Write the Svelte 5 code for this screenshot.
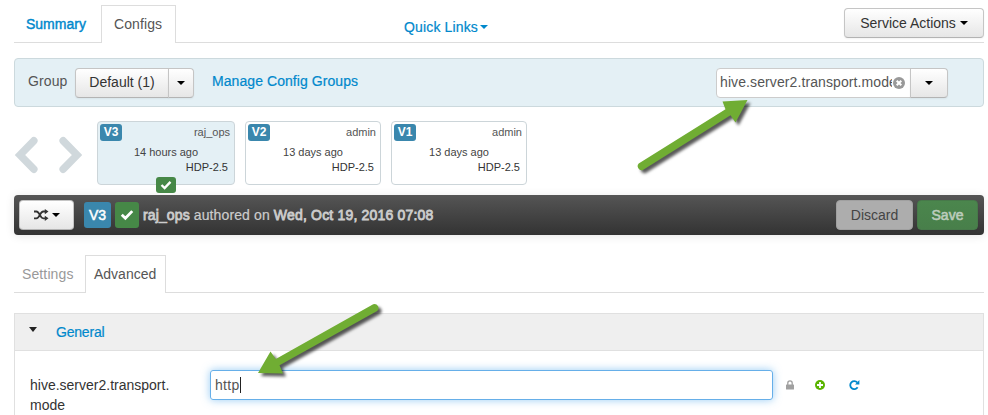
<script>
  const versions = [
    { tag: 'V3', user: 'raj_ops', age: '14 hours ago', stack: 'HDP-2.5', current: true },
    { tag: 'V2', user: 'admin', age: '13 days ago', stack: 'HDP-2.5', current: false },
    { tag: 'V1', user: 'admin', age: '13 days ago', stack: 'HDP-2.5', current: false }
  ];
</script>

{#snippet check(w)}
  <svg class="check" width={w} height={w * 0.8} viewBox="0 0 12 9.6"><path d="M1.5 5 4.6 8 10.5 1.8" fill="none" stroke="#fff" stroke-width="2.4" /></svg>
{/snippet}

<div class="page">
  <header class="top">
    <nav class="tabs">
      <a class="tab summary" href="#summary">Summary</a>
      <span class="tab active">Configs</span>
    </nav>
    <a class="quick" href="#links">Quick Links<i class="caret"></i></a>
    <button class="btn actions">Service Actions<i class="caret"></i></button>
  </header>

  <section class="group-bar">
    <span class="group-label">Group</span>
    <div class="split">
      <button class="btn name">Default (1)</button>
      <button class="btn drop"><i class="caret"></i></button>
    </div>
    <a class="manage" href="#groups">Manage Config Groups</a>
    <div class="search">
      <div class="field">
        <span class="query">hive.server2.transport.mode</span>
        <svg width="12" height="12" viewBox="0 0 12 12"><circle cx="6" cy="6" r="6" fill="#999" /><path d="M3.7 3.7 8.3 8.3M8.3 3.7 3.7 8.3" stroke="#fff" stroke-width="2" /></svg>
      </div>
      <button class="btn filter"><i class="caret"></i></button>
    </div>
  </section>

  <section class="versions">
    <svg class="pager" width="68" height="38" viewBox="0 0 68 38" fill="none" stroke="#d0d8dc" stroke-width="7.5">
      <path d="M19.8 4.8 6 19 19.8 33.2" stroke-linecap="round" />
      <path d="M49.2 4.8 63 19 49.2 33.2" stroke-linecap="round" />
    </svg>
    {#each versions as v}
      <article class="card" class:current={v.current}>
        <div class="row"><b class="tag">{v.tag}</b><span class="user">{v.user}</span></div>
        <div class="age">{v.age}</div>
        <div class="stack">{v.stack}</div>
        {#if v.current}<span class="mark">{@render check(12)}</span>{/if}
      </article>
    {/each}
  </section>

  <section class="version-bar">
    <button class="btn shuffle">
      <svg width="15" height="12" viewBox="0 0 15 12"><path d="M0 2.5H2.4C5.7 2.5 6 9.3 9.2 9.3H11M0 9.3H2.4C5.7 9.3 6 2.5 9.2 2.5H11" fill="none" stroke="#333" stroke-width="1.8" /><path d="M10.8 0 14.5 2.6 10.8 5.2ZM10.8 6.7 14.5 9.3 10.8 11.9Z" fill="#333" /></svg>
      <i class="caret"></i>
    </button>
    <span class="badge blue">V3</span>
    <span class="badge green">{@render check(14)}</span>
    <span class="authored"><b>raj_ops</b> authored on <b class="date">Wed, Oct 19, 2016 07:08</b></span>
    <button class="btn discard">Discard</button>
    <button class="btn save">Save</button>
  </section>

  <nav class="subtabs">
    <span class="subtab muted">Settings</span>
    <span class="subtab active">Advanced</span>
  </nav>

  <section class="panel">
    <div class="panel-head"><i class="caret"></i><a href="#general">General</a></div>
    <div class="property">
      <div class="prop-name">hive.server2.transport.<br />mode</div>
      <div class="value">http<i class="cursor"></i></div>
      <svg class="lock" width="8" height="10" viewBox="0 0 8 10"><path d="M1.8 5V3.1a2.2 2.2 0 0 1 4.4 0V5" fill="none" stroke="#a0a0a0" stroke-width="1.3" /><rect y="4.4" width="8" height="5.2" rx=".6" fill="#a0a0a0" /></svg>
      <svg class="plus" width="10" height="10" viewBox="0 0 10 10"><circle cx="5" cy="5" r="5" fill="#5ab400" /><path d="M5 2v6M2 5h6" stroke="#fff" stroke-width="1.8" /></svg>
      <svg class="redo" width="11" height="10" viewBox="0 0 11 10"><path d="M8.3 2.5A4 4 0 1 0 8.6 7.3" fill="none" stroke="#0088cc" stroke-width="1.8" /><path d="M10.4 0V4.4H6Z" fill="#0088cc" /></svg>
    </div>
  </section>

  <svg class="arrows" width="988" height="415" viewBox="0 0 988 415">
    <g fill="#70ad33" stroke="none">
      <path class="arrow" d="M638.7 163.5 725.5 109.2 722.5 101.5 747.5 100 735.5 122.5 730.5 115.3 642.8 170A4 4 0 0 1 638.7 163.5Z" />
      <path class="arrow" d="M373.2 304.2 275.8 359 270.5 351.5 258 373 283 373.5 279.5 365.3 377.1 311A4 4 0 0 0 373.2 304.2Z" />
    </g>
  </svg>
</div>

<style>
  :global(body) { margin: 0; background: #fff; }
  * { box-sizing: border-box; }
  .page { position: relative; width: 988px; height: 415px; overflow: hidden; padding: 5px 4px 0 14px; font: 14px/20px "Liberation Sans", Arial, sans-serif; color: #333; }
  a { color: #0088cc; text-decoration: none; -webkit-text-stroke: .2px; }
  .caret { display: inline-block; width: 0; height: 0; border: 4px solid transparent; border-top-color: #000; border-bottom: 0; }
  .btn { display: flex; align-items: center; justify-content: center; height: 30px; margin: 0; padding: 0; font: inherit; color: #333; border: 1px solid #c5c5c5; border-bottom-color: #b3b3b3; border-radius: 4px; background: linear-gradient(#fff, #e6e6e6); box-shadow: 0 1px 2px rgba(0, 0, 0, .05); }

  .top { display: flex; height: 38px; border-bottom: 1px solid #ddd; }
  .tabs { display: flex; width: 390px; }
  .tab { height: 38px; padding: 9px 12px 0; }
  .summary { width: 87px; -webkit-text-stroke: .4px; }
  .active { color: #555; background: #fff; border: 1px solid #ddd; border-bottom: 0; }
  .tab.active { width: 75px; padding-top: 8px; letter-spacing: .1px; }
  .quick { width: 440px; padding-top: 12px; letter-spacing: .15px; }
  .quick .caret { border-top-color: #0088cc; margin: 0 0 3px 2px; }
  .actions { width: 140px; margin-top: 3px; }
  .actions .caret { margin-left: 4px; }

  .group-bar { display: flex; align-items: center; height: 49px; margin-top: 15px; padding: 0 35px 0 13px; border: 1px solid #ccd9dd; border-radius: 4px; background: #e4f0f5; }
  .group-label { width: 47px; margin-bottom: 3px; color: #555; letter-spacing: .1px; }
  .split { display: flex; width: 137px; }
  .name { width: 94px; padding-bottom: 2px; border-radius: 4px 0 0 4px; }
  .drop { width: 26px; margin-left: -1px; border-radius: 0 4px 4px 0; }
  .manage { margin-bottom: 3px; letter-spacing: .07px; }
  .search { display: flex; margin-left: auto; }
  .field { display: flex; align-items: center; justify-content: space-between; width: 195px; height: 30px; padding: 0 5px 0 3px; color: #555; background: #fff; border: 1px solid #ccc; border-radius: 4px 0 0 4px; }
  .query { width: 172px; margin-bottom: 2px; overflow: hidden; white-space: nowrap; letter-spacing: .1px; }
  .field svg { flex: none; }
  .filter { width: 38px; margin-left: -1px; border-radius: 0 4px 4px 0; }

  .versions { display: flex; gap: 10px; height: 74px; margin-top: 14px; }
  .pager { margin: 15px 5px 0 0; }
  .card { position: relative; width: 136px; height: 64px; padding: 2px; font-size: 11px; border: 1px solid #ccd5d9; border-radius: 4px; background: #fff; }
  .card.current { width: 138px; background: #e4f0f5; }
  .row { display: flex; justify-content: space-between; height: 18px; line-height: 16px; color: #555; }
  .tag { width: 22px; height: 17px; text-align: center; font-size: 12px; color: #fff; background: #3a87ad; border-radius: 3px; }
  .user { padding-right: 2px; }
  .age { height: 15px; line-height: 20px; text-align: center; color: #444; }
  .stack { padding-right: 4px; line-height: 20px; text-align: right; }
  .mark { position: absolute; left: 58px; bottom: -9px; display: flex; align-items: center; justify-content: center; width: 20px; height: 16px; border-radius: 3px; background: #468847; }

  .version-bar { display: flex; align-items: center; height: 40px; padding: 0 6px 0 5px; border-radius: 4px; background: linear-gradient(#555, #333); box-shadow: 0 1px 10px rgba(0, 0, 0, .1); color: #ccc; }
  .shuffle { width: 55px; margin-right: 10px; gap: 3px; }
  .badge { display: flex; align-items: center; justify-content: center; height: 26px; border-radius: 3px; color: #fff; }
  .blue { width: 27px; margin-right: 4px; background: #3a87ad; -webkit-text-stroke: .5px; }
  .green { width: 24px; margin-right: 4px; background: #468847; }
  .authored { flex: 1; letter-spacing: .12px; -webkit-text-stroke: .2px; }
  .authored b { font-weight: 400; -webkit-text-stroke: .8px; }
  .authored .date { letter-spacing: .18px; }
  .discard { width: 77px; margin-right: 4px; color: #444; background: #adadad; border-color: #a0a0a0; }
  .save { width: 61px; color: #bcccbc; background: linear-gradient(#4b864d, #487f4a); border-color: #47794a; -webkit-text-stroke: .6px; }

  .subtabs { display: flex; height: 38px; margin-top: 20px; border-bottom: 1px solid #ddd; }
  .subtab { height: 38px; padding: 9px 8px 0; }
  .muted { width: 71px; color: #999; letter-spacing: .12px; }
  .subtab.active { width: 81px; padding-top: 8px; }

  .panel { height: 110px; margin-top: 20px; border: 1px solid #e0e0e0; }
  .panel-head { display: flex; height: 37px; padding: 8px 15px; background: #efefef; border-bottom: 1px solid #e0e0e0; }
  .panel-head a { letter-spacing: -.2px; }
  .panel-head .caret { margin: 5px 19px 0 -1px; border-top-color: #222; border-top-width: 5px; }
  .property { display: flex; padding: 19px 0 0 15px; }
  .prop-name { width: 180px; padding-top: 5px; }
  .value { display: flex; align-items: center; width: 563px; height: 30px; padding-left: 4px; color: #555; letter-spacing: .3px; border: 1px solid #66afe9; border-radius: 3px; box-shadow: 0 0 8px rgba(82, 168, 236, .6); }
  .cursor { width: 1px; height: 16px; background: #222; }
  .lock { margin: 10px 0 0 13px; }
  .plus { margin: 10px 0 0 21px; }
  .redo { margin: 10px 0 0 24px; }
  .arrows { position: absolute; left: 0; top: 0; pointer-events: none; }
  .arrow { filter: drop-shadow(3px 3px 1.5px rgba(0, 0, 0, .65)); }
</style>
